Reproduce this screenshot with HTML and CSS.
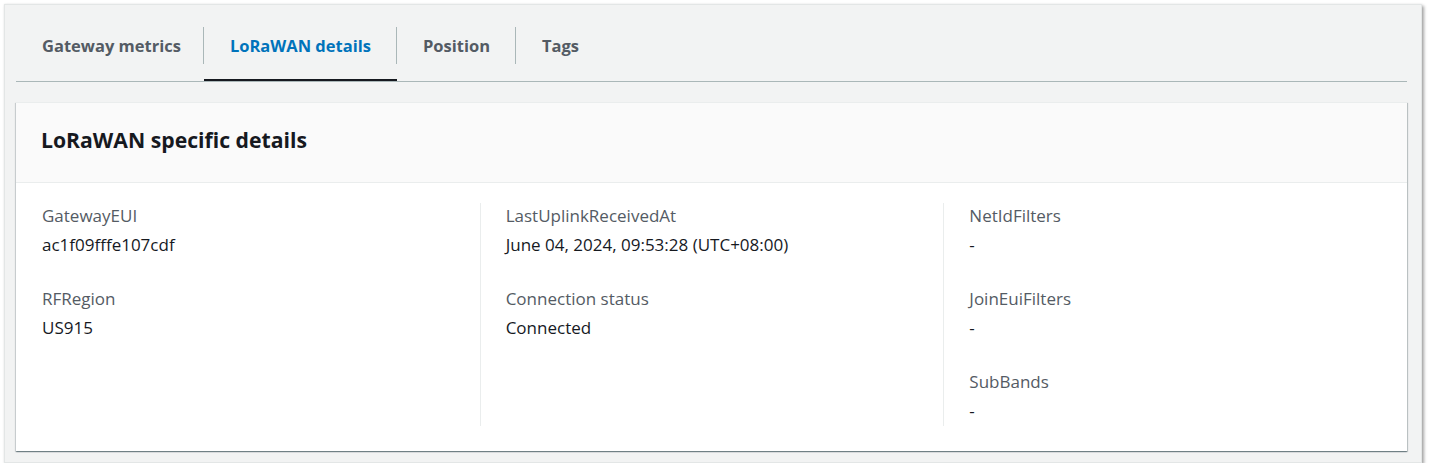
FILE: index.html
```html
<!DOCTYPE html>
<html lang="en">
<head>
<meta charset="utf-8">
<title>LoRaWAN details</title>
<link rel="stylesheet" href="styles.css">
</head>
<body>
<div class="frame">
  <ul class="tabs">
    <li class="tab first"><span class="tab-link">Gateway metrics</span></li>
    <li class="tab active"><span class="tab-link">LoRaWAN details</span></li>
    <li class="tab"><span class="tab-link">Position</span></li>
    <li class="tab last"><span class="tab-link">Tags</span></li>
  </ul>
  <section class="card">
    <header class="card-header">
      <h2 class="card-title">LoRaWAN specific details</h2>
    </header>
    <div class="card-body">
      <div class="column">
        <div class="pair"><div class="label">GatewayEUI</div><div class="value">ac1f09fffe107cdf</div></div>
        <div class="pair"><div class="label">RFRegion</div><div class="value">US915</div></div>
      </div>
      <div class="column">
        <div class="pair"><div class="label">LastUplinkReceivedAt</div><div class="value">June 04, 2024, 09:53:28 (UTC+08:00)</div></div>
        <div class="pair"><div class="label">Connection status</div><div class="value">Connected</div></div>
      </div>
      <div class="column">
        <div class="pair"><div class="label">NetIdFilters</div><div class="value">-</div></div>
        <div class="pair"><div class="label">JoinEuiFilters</div><div class="value">-</div></div>
        <div class="pair"><div class="label">SubBands</div><div class="value">-</div></div>
      </div>
    </div>
  </section>
</div>
</body>
</html>
```
FILE: styles.css
```css
* { box-sizing: border-box; }

html, body {
  margin: 0;
  padding: 0;
  background: #ffffff;
}

body {
  font-family: "Open Sans", "Noto Sans", Arial, sans-serif;
  color: #16191f;
}

.frame {
  margin: 4px 0 0 4px;
  width: 1418px;
  background: #f2f3f3;
  border: 1px solid #e3e6e6;
  box-shadow: 2px 2px 3px rgba(0, 0, 0, 0.35), 0 0 2px rgba(0, 0, 0, 0.08);
  padding: 11px 14px 11px 11px;
}

.tabs {
  list-style: none;
  margin: 0;
  padding: 0;
  display: flex;
  border-bottom: 1px solid #aab7b8;
}

.tab {
  padding: 11px 0 15px;
  border-bottom: 2px solid transparent;
}

.tab.active {
  border-bottom-color: #16191f;
}

.tab-link {
  display: block;
  height: 37px;
  line-height: 37px;
  padding: 0 25px 0 26px;
  border-right: 1px solid #aab7b8;
  font-size: 16.5px;
  font-weight: 700;
  color: #545b64;
  white-space: nowrap;
}

.tab.first .tab-link {
  padding-right: 22px;
}

.tab.last .tab-link {
  border-right: 0;
}

.tab.active .tab-link {
  color: #0073bb;
}

.card {
  margin-top: 20px;
  background: #ffffff;
  border-top: 1px solid #eaeded;
  box-shadow: 0 1px 1px 0 rgba(0, 28, 36, 0.35), 1px 1px 1px 0 rgba(0, 28, 36, 0.18), -1px 1px 1px 0 rgba(0, 28, 36, 0.12);
}

.card-header {
  background: #fafafa;
  border-bottom: 1px solid #eaeded;
  padding: 22px 25px 27px;
}

.card-title {
  margin: 0;
  font-size: 21.2px;
  line-height: 30px;
  font-weight: 700;
  color: #16191f;
}

.card-body {
  display: grid;
  grid-template-columns: repeat(3, 1fr);
  padding: 20px 0 25px;
}

.column {
  display: flex;
  flex-direction: column;
  gap: 30px;
  padding: 0 25px 4px;
  border-left: 1px solid #eaeded;
}

.column:first-child {
  border-left-color: transparent;
}

.label {
  font-size: 17px;
  line-height: 26px;
  color: #545b64;
}

.value {
  margin-top: 5px;
  font-size: 17px;
  line-height: 22px;
  color: #16191f;
}
```
